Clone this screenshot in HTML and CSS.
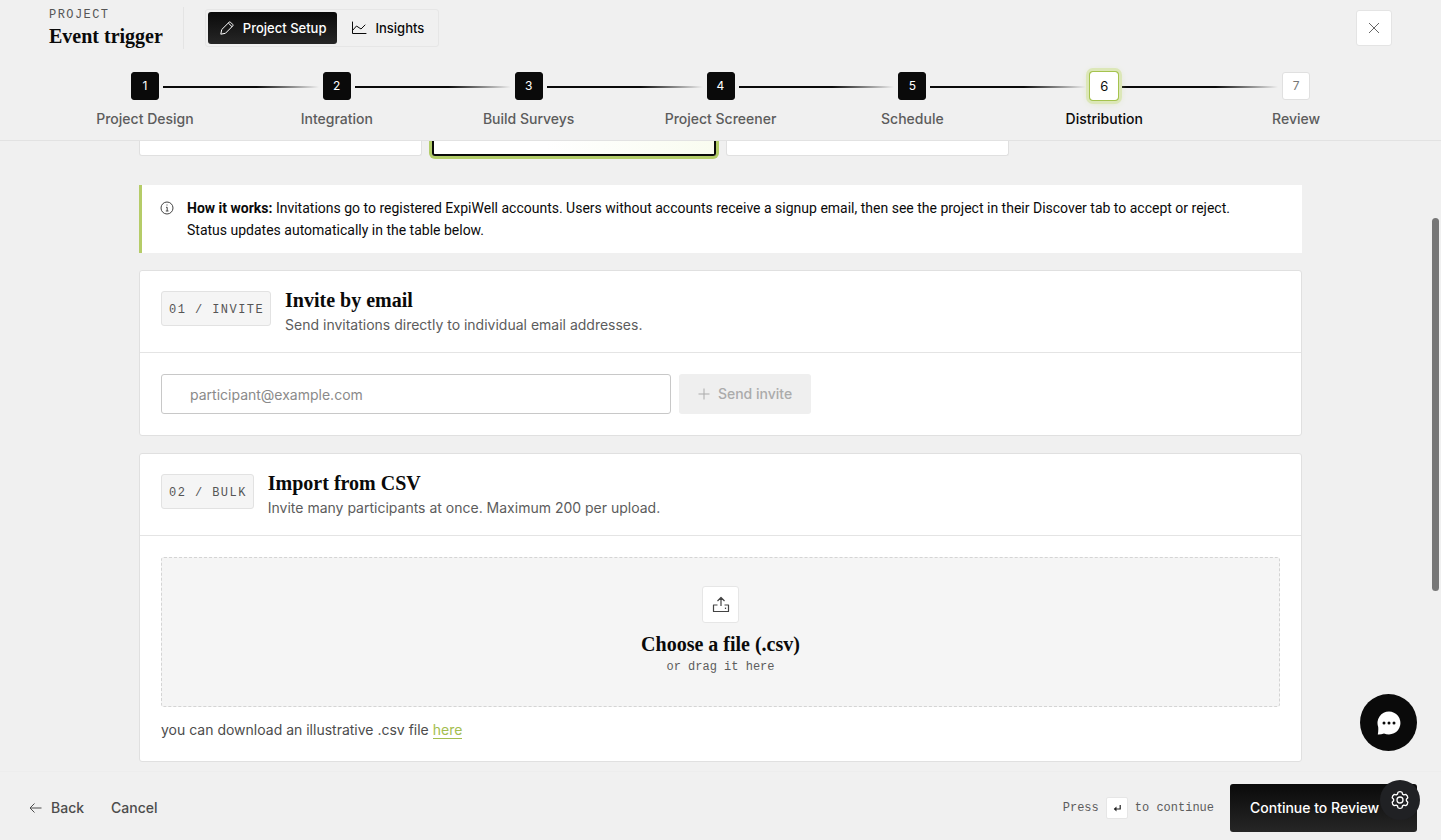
FILE: index.html
```html
<!DOCTYPE html>
<html lang="en">
<head>
    <meta charset="UTF-8">
    <meta name="viewport" content="width=device-width, initial-scale=1">
    <title>Event trigger - Distribution</title>
    <link rel="stylesheet" href="styles.css">
</head>
<body>
    <header class="header">
        <div class="header-top">
            <div class="project">
                <span class="eyebrow">PROJECT</span>
                <h1>Event trigger</h1>
            </div>
            <nav class="tabs">
                <button type="button" class="tab active">
                    <svg width="16" height="16" viewBox="0 0 16 16" fill="none" stroke="currentColor" stroke-linejoin="round"><path d="M1.800 14.200l.9-4.600L10 2.300q.8-.8 1.600 0l2.100 2.100q.8.800 0 1.600l-7.300 7.300zM9.300 3l3.700 3.700"/></svg>
                    Project Setup
                </button>
                <button type="button" class="tab">
                    <svg width="16" height="16" viewBox="0 0 16 16" fill="none" stroke="currentColor" stroke-linecap="round" stroke-linejoin="round"><path d="M1.500 2v11.500H15M1.500 10.500l4-4.500 4.500 3 4-4"/></svg>
                    Insights
                </button>
            </nav>
            <button type="button" class="close" aria-label="Close">
                <svg width="12" height="12" viewBox="0 0 12 12" stroke="currentColor"><path d="M1 1l10 10M11 1L1 11"/></svg>
            </button>
        </div>

        <ol class="steps">
            <li class="step done"><span class="num">1</span><span class="name">Project Design</span></li>
            <li class="step done"><span class="num">2</span><span class="name">Integration</span></li>
            <li class="step done"><span class="num">3</span><span class="name">Build Surveys</span></li>
            <li class="step done"><span class="num">4</span><span class="name">Project Screener</span></li>
            <li class="step done"><span class="num">5</span><span class="name">Schedule</span></li>
            <li class="step current"><span class="num">6</span><span class="name">Distribution</span></li>
            <li class="step"><span class="num">7</span><span class="name">Review</span></li>
        </ol>
    </header>

    <main class="content">
        <div class="container">
            <!-- Distribution options -->
            <div class="options">
                <div class="option"></div>
                <div class="option selected"></div>
                <div class="option"></div>
            </div>

            <div class="notice">
                <svg width="14" height="14" viewBox="0 0 14 14" fill="none" stroke="currentColor"><circle cx="7" cy="7" r="6"/><path d="M6 6.300h1.200V10M5.800 10h2.700M6.500 4h1"/></svg>
                <p><strong>How it works:</strong> Invitations go to registered ExpiWell accounts. Users without accounts receive a signup email, then see the project in their Discover tab to accept or reject.<br>Status updates automatically in the table below.</p>
            </div>

            <section class="card">
                <div class="card-head">
                    <span class="badge">01 / INVITE</span>
                    <div>
                        <h2>Invite by email</h2>
                        <p>Send invitations directly to individual email addresses.</p>
                    </div>
                </div>
                <div class="card-body">
                    <form class="invite-form">
                        <input type="email" aria-label="Email address" placeholder="participant@example.com">
                        <button type="submit" disabled>
                            <svg width="12" height="12" viewBox="0 0 12 12" stroke="currentColor"><path d="M6 .5v11M.5 6h11"/></svg>
                            Send invite
                        </button>
                    </form>
                </div>
            </section>

            <section class="card">
                <div class="card-head">
                    <span class="badge">02 / BULK</span>
                    <div>
                        <h2>Import from CSV</h2>
                        <p>Invite many participants at once. Maximum 200 per upload.</p>
                    </div>
                </div>
                <div class="card-body">
                    <button type="button" class="dropzone">
                        <span class="drop-icon">
                            <svg width="18" height="18" viewBox="0 0 18 18" fill="none" stroke="currentColor" stroke-width="1.200" stroke-linejoin="round"><path d="M9 10V1.500M5.500 5L9 1.500 12.500 5M5.500 9h-4v6.500h15V9h-4"/><path d="M13.500 11.600v1.400"/></svg>
                        </span>
                        <span class="drop-title">Choose a file (.csv)</span>
                        <span class="drop-sub">or drag it here</span>
                    </button>
                    <p class="sample">you can download an illustrative .csv file <a href="#">here</a></p>
                </div>
            </section>
        </div>
        <div class="scroll-thumb"></div>
    </main>

    <footer class="footer">
        <button type="button" class="link-btn">
            <svg width="13" height="12" viewBox="0 0 13 12" fill="none" stroke="currentColor"><path d="M12.500 6H1M5.500 1.500L1 6l4.500 4.500"/></svg>
            Back
        </button>
        <button type="button" class="link-btn">Cancel</button>
        <div class="hint">Press <kbd><svg width="8" height="8" viewBox="0 0 8 8" fill="none" stroke="currentColor" stroke-width="1.200"><path d="M7.200 1v4H1.500"/><path d="M3.500 2.500L.8 5l2.700 2.500z" fill="currentColor" stroke="none"/></svg></kbd> to continue</div>
        <button type="button" class="primary">Continue to Review</button>
    </footer>

    <button type="button" class="chat" aria-label="Open chat">
        <svg width="26" height="26" viewBox="0 0 26 26"><path fill="#fff" d="M13 1.500a11.500 11.500 0 1 1-5 21.900Q5 24.700 1.800 24.500 2.500 21 2.200 17A11.500 11.500 0 0 1 13 1.500z"/><g fill="#0a0a0a"><circle cx="8" cy="13" r="1.500"/><circle cx="13" cy="13" r="1.500"/><circle cx="18" cy="13" r="1.500"/></g></svg>
    </button>
    <button type="button" class="settings" aria-label="Settings">
        <svg width="20" height="20" viewBox="0 0 20 20" fill="none" stroke="currentColor" stroke-width="1.300" stroke-linejoin="round"><path d="M8 2.200Q10 1 12 2.200l.5 1.900 1.300.8 2-.5q2 1.200 2 3.400L16.400 9.300v1.400l1.400 1.500q0 2.200-2 3.400l-2-.5-1.300.8-.5 1.900Q10 19 8 17.800l-.5-1.900-1.300-.8-2 .5q-2-1.200-2-3.400l1.400-1.500V9.300L2.200 7.800q0-2.200 2-3.400l2 .5 1.300-.8z"/><circle cx="10" cy="10" r="3"/></svg>
    </button>
</body>
</html>
```
FILE: styles.css
```css
* { box-sizing: border-box; margin: 0; padding: 0; }
body {
    height: 100vh;
    display: flex; flex-direction: column;
    overflow: hidden;
    background: #f0f0f0; color: #0a0a0a;
    font-family: Inter, "Liberation Sans", sans-serif;
    font-size: 14px; line-height: 22px;
}
button { font: inherit; color: inherit; border: none; background: none; cursor: pointer; }
svg { flex-shrink: 0; }
h1, h2, .drop-title {
    font-family: "Liberation Serif", serif;
    font-size: 20px; font-weight: bold; line-height: 26px;
}

/* Header */
.header { flex-shrink: 0; padding: 7px 49px 11px; border-bottom: 1px solid #e2e2e2; }
.header-top { display: flex; align-items: center; }
.eyebrow, .badge {
    font-family: "Liberation Mono", monospace;
    font-size: 12px; letter-spacing: 0.12em; color: #555;
}
.eyebrow { display: block; line-height: 16px; }
.project { padding-right: 20px; border-right: 1px solid #e4e4e4; }
.tabs { display: flex; margin-left: 21px; padding: 2px; border: 1px solid #e6e6e6; border-radius: 3px; }
.tab {
    display: flex; align-items: center; gap: 8px;
    height: 32px; padding: 0 11px;
    border-radius: 3px; font-size: 13px; font-weight: 500;
}
.tab + .tab { padding: 0 12px 0 14px; }
.tab.active { background: linear-gradient(#0a0a0a, #262626); color: #fff; }
.close {
    display: flex; align-items: center; justify-content: center;
    width: 36px; height: 36px; margin-left: auto;
    background: #fff; border: 1px solid #e4e4e4; border-radius: 3px; color: #666;
}

/* Stepper */
.steps { display: flex; margin-top: 23px; list-style: none; }
.step {
    position: relative;
    flex: 1;
    display: flex; flex-direction: column; align-items: center; gap: 9px;
    line-height: 20px; font-weight: 500; color: #5c5c5c;
}
.step:not(:last-child)::after {
    content: "";
    position: absolute; top: 14px; left: calc(50% + 18px);
    width: calc(100% - 36px); height: 2px;
    background: linear-gradient(90deg, #0a0a0a 60%, #f0f0f0);
}
.num {
    display: flex; align-items: center; justify-content: center;
    width: 28px; height: 28px;
    background: #fff; border: 1px solid #e0e0e0; border-radius: 3px;
    font-size: 12px; font-weight: 400; color: #777;
}
.done .num { background: #0a0a0a; border-color: #0a0a0a; color: #fff; }
.current { color: #0a0a0a; }
.current .num {
    border-color: #fff; color: #0a0a0a; font-size: 13px;
    box-shadow: 0 0 0 1px #a5c34e, 0 0 0 4px #dce7b8, 0 1px 8px #cbdc98;
    z-index: 1;
}

/* Content */
.content { position: relative; flex: 1; min-height: 0; overflow: hidden; }
.container { max-width: 1163px; margin: 0 auto; display: flex; flex-direction: column; gap: 17px; }
.options { display: grid; grid-template-columns: repeat(4, 1fr); gap: 10px; margin-bottom: 12px; }
.option { height: 15px; background: #fff; border: 1px solid #e0e0e0; border-top: none; border-radius: 0 0 3px 3px; }
.option.selected {
    border: 2px solid #0a0a0a; border-top: none;
    background: linear-gradient(90deg, #fff 40%, #f9fcf0);
    box-shadow: 0 0 0 3px #b2cc68;
}
.notice {
    display: flex; gap: 13px;
    padding: 12px 18px;
    background: #fff; border-left: 3px solid #b5cc68;
    font-family: Roboto, "Liberation Sans", sans-serif;
}
.notice svg { margin-top: 4px; color: #444; }
.card { background: #fff; border: 1px solid #e0e0e0; border-radius: 3px; }
.card-head {
    display: flex; align-items: flex-start; gap: 14px;
    padding: 16px 21px 15px;
    border-bottom: 1px solid #e4e4e4;
}
.card-head p { line-height: 24px; color: #5c5c5c; }
.badge {
    margin-top: 4px; padding: 3px 6px 0 7px;
    line-height: 30px; white-space: pre;
    background: #f5f5f5; border: 1px solid #e2e2e2; border-radius: 3px;
}
.card-body { padding: 21px; }
.invite-form { display: flex; gap: 8px; max-width: 650px; }
.invite-form input {
    flex: 1; min-width: 0; height: 40px; padding: 0 28px;
    border: 1px solid #c8c8c8; border-radius: 3px;
    background: #fff; font: inherit;
}
.invite-form input::placeholder { color: #8a8a8a; }
.invite-form button {
    display: flex; align-items: center; justify-content: center; gap: 8px;
    width: 132px; background: #efefef; color: #ababab;
    border-radius: 3px; font-weight: 500;
}
.dropzone {
    display: flex; flex-direction: column; align-items: center;
    width: 100%; padding: 28px;
    background: #f5f5f5; border: 1px dashed #d4d4d4; border-radius: 3px;
}
.drop-icon {
    display: flex; align-items: center; justify-content: center;
    width: 37px; height: 37px; margin-bottom: 8px;
    background: #fff; border: 1px solid #e6e6e6; border-radius: 3px; color: #444;
}
.drop-sub { font-family: "Liberation Mono", monospace; font-size: 12px; line-height: 21px; color: #5c5c5c; }
.sample { margin-top: 12px; line-height: 21px; color: #4c4c4c; }
.sample a { color: #a3bd4e; text-decoration: none; border-bottom: 1px solid #a3bd4e; }
.scroll-thumb {
    position: absolute; right: 2px; top: 77px;
    width: 7px; height: 373px;
    background: #777; border-radius: 4px;
}

/* Footer */
.footer {
    flex-shrink: 0;
    display: flex; align-items: center;
    padding: 12px 24px 8px 29px;
    border-top: 1px solid #ededed;
}
.link-btn { display: flex; align-items: center; gap: 9px; margin-right: 27px; font-weight: 500; color: #4c4c4c; }
.hint {
    display: flex; align-items: center; gap: 7px;
    margin-left: auto; margin-right: 16px;
    font-family: "Liberation Mono", monospace; font-size: 12px; color: #5c5c5c;
}
kbd {
    display: flex; align-items: center; justify-content: center;
    width: 22px; height: 22px;
    background: #fff; border: 1px solid #e6e6e6; border-radius: 2px; color: #222;
}
.primary {
    width: 187px; height: 48px; padding-left: 20px;
    background: linear-gradient(#0a0a0a, #262626);
    border-radius: 3px; color: #fff; font-weight: 500; text-align: left;
}

/* Floating buttons */
.chat, .settings {
    position: fixed;
    display: flex; align-items: center; justify-content: center;
    border-radius: 50%; color: #fff;
}
.chat { right: 24px; bottom: 89px; width: 57px; height: 57px; background: #0a0a0a; }
.settings { right: 21px; bottom: 20px; width: 40px; height: 40px; background: #202124; }
```
